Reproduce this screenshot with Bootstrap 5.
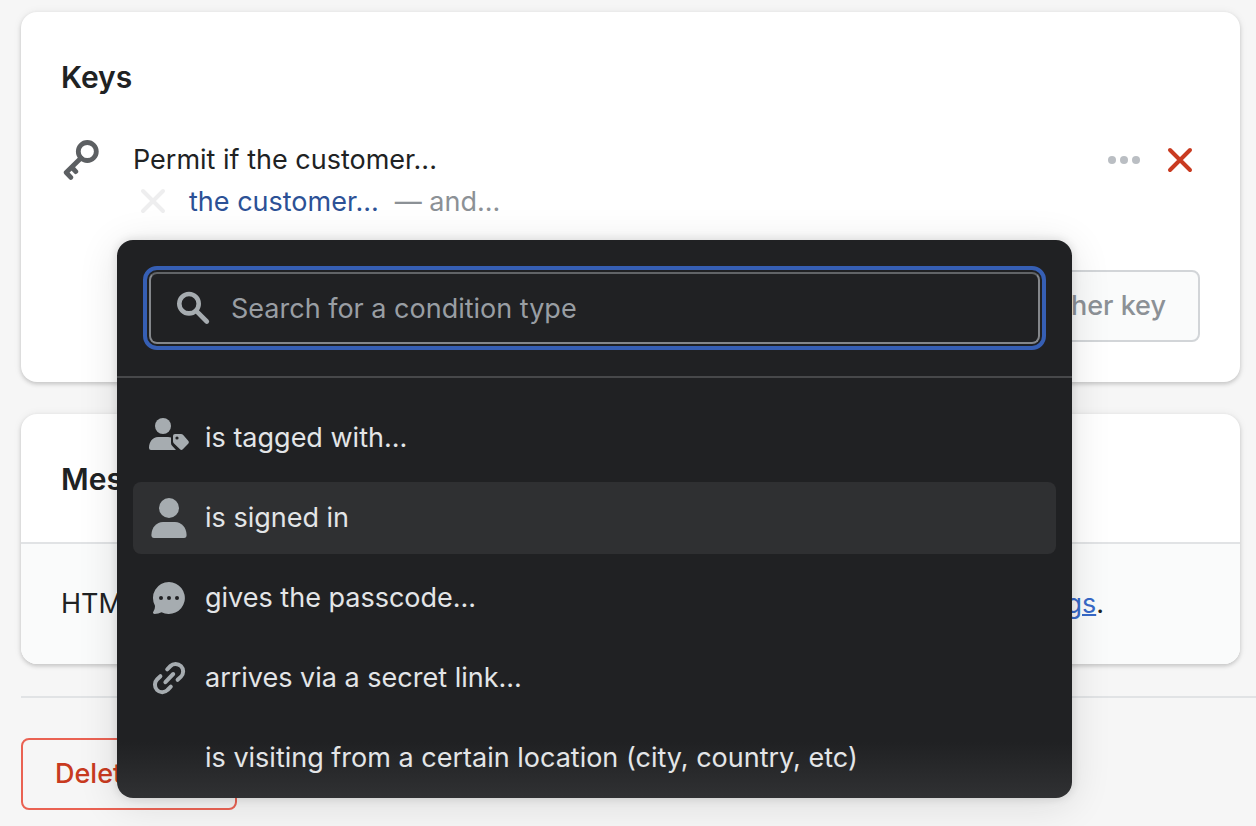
<!DOCTYPE html>
<html lang="en">
<head>
<meta charset="utf-8">
<meta name="viewport" content="width=device-width, initial-scale=1">
<title>Edit lock</title>
<link href="https://cdn.jsdelivr.net/npm/bootstrap@5.3.0/dist/css/bootstrap.min.css" rel="stylesheet">
<style>
  body { font-family: Inter, "Liberation Sans", sans-serif; font-size: 27px; line-height: 40px; color: #202223; background: #f6f6f6; overflow-x: hidden; }
  .page { padding: 12px 0 16px 21px; }
  .panel { border: 0; border-radius: 16px; margin: 0 16px 32px 0; box-shadow: 0 0 10px rgba(23,24,24,.06), 0 2px 4px rgba(0,0,0,.18); }
  .panel-pad { padding: 40px; }
  .panel h2 { font-size: 30px; line-height: 46px; font-weight: 600; margin: 0; padding-top: 2px; }
  .panel-foot { border-top: 2px solid #e1e3e5; background: #fafbfb; border-radius: 0 0 16px 16px; }
  .ico { width: 40px; height: 40px; display: block; flex: none; }
  .ico-btn { border: 0; background: none; padding: 0; flex: none; }
  .key-row { margin-top: 40px; }
  .key-gap { gap: 32px; }
  .cond { line-height: 44px; }
  .cond a { color: #2c5196; text-decoration: none; }
  .muted { color: #8c9196; }
  .add-row { margin-top: 46px; }
  .btn-lg2 { --bs-btn-font-size: 27px; --bs-btn-font-weight: 500; --bs-btn-border-width: 2px; --bs-btn-border-radius: 8px; --bs-btn-padding-x: 32px; --bs-btn-padding-y: 14px; --bs-btn-line-height: 40px; min-width: 216px; text-align: left; }
  .btn-add { --bs-btn-disabled-color: #8c9196; --bs-btn-disabled-bg: #fafbfb; --bs-btn-disabled-border-color: #d2d5d8; --bs-btn-disabled-opacity: 1; }
  .btn-del { --bs-btn-color: #c83a20; --bs-btn-border-color: #ea6253; --bs-btn-hover-color: #c83a20; --bs-btn-hover-border-color: #c83a20; }
  .rule { height: 2px; background: #e1e3e5; border: 0; opacity: 1; margin: 0 0 40px; }
  .note { padding-right: 136px; }
  .note a { color: #3769c8; text-decoration-thickness: 2px; }
  .picker { top: 100%; left: -16px; width: 100%; height: 558px; margin-top: 16px; background: linear-gradient(#202123 calc(100% - 56px), #303133); border-radius: 16px; color: #e3e5e7; overflow: hidden; z-index: 5; }
  .picker-shadow { box-shadow: 0 6px 40px rgba(23,24,24,.12), 0 0 10px rgba(23,24,24,.14); }
  .picker-search { padding: 32px; border-bottom: 2px solid #47484a; }
  .picker-search .ico { left: 24px; top: 16px; }
  .search-box, .search-box:focus { height: 72px; padding: 0 32px 0 80px; font-size: 27px; line-height: 40px; color: #e3e5e7; background: #202123; border: 2px solid #84878b; border-top-color: #616467; border-radius: 8px; outline: 4px solid #365fb4; outline-offset: 2px; box-shadow: none; }
  .search-box::placeholder { color: #999ea3; opacity: 1; }
  .picker-list { padding: 24px 16px; gap: 8px; }
  .picker-item { border: 0; background: none; color: inherit; text-align: left; padding: 16px; gap: 16px; border-radius: 8px; width: 100%; line-height: 40px; }
  .picker-item.current { background: #2f3032; }
</style>
</head>
<body>
<main class="page">
  <section class="card panel">
    <div class="panel-pad">
      <h2>Keys</h2>
      <div class="key-row d-flex align-items-start">
        <div class="d-flex key-gap flex-fill">
          <svg class="ico" viewBox="0 0 40 40" fill="none" stroke="#5c5f62" stroke-width="4.8" stroke-linecap="round" stroke-linejoin="round" aria-hidden="true"><circle cx="26.3" cy="11.5" r="9"/><path d="M20 18 5.200 32.500 9.800 37.400M11 27.500 14.800 31.600"/></svg>
          <div class="position-relative flex-fill">
            <div>Permit if the customer...</div>
            <div class="cond d-flex align-items-center">
              <button class="ico-btn me-3" type="button" aria-label="Remove condition"><svg class="ico" viewBox="0 0 40 40" stroke="#eeeeef" stroke-width="4" stroke-linecap="round"><path d="M10 9 30 29M30 9 10 29"/></svg></button>
              <a href="#">the customer...</a>
              <span class="muted ms-3">— and...</span>
            </div>
            <div class="picker picker-shadow position-absolute">
              <div class="picker-search">
                <div class="position-relative">
                  <input class="form-control search-box" type="text" placeholder="Search for a condition type" aria-label="Search for a condition type">
                  <svg class="ico position-absolute" viewBox="0 0 40 40" fill="none" stroke="#a6acb0" stroke-width="4.600" stroke-linecap="round" aria-hidden="true"><circle cx="16" cy="15.700" r="9.700"/><path d="M23.200 22.900 33.800 33.500"/></svg>
                </div>
              </div>
              <div class="picker-list d-flex flex-column">
                <button class="picker-item d-flex" type="button">
                  <svg class="ico" viewBox="0 0 40 40" fill="#a6acb0" aria-hidden="true"><circle cx="14" cy="8" r="8"/><path d="M9 19h10q2 0 3 .6v5.400q0 1.800 1.300 3.100L27 32H2q-2 0-2-2c0-6 3.500-11 9-11Z"/><path fill-rule="evenodd" d="M26 16h6q1.200 0 2 .8l5.200 6q1.300 1.500 0 3l-5.400 5.500q-1.400 1.300-2.800 0L25 25.500q-1-1-1-2.300V18q0-2 2-2Zm2 2.400a1.600 1.600 0 1 0 0 3.200 1.600 1.600 0 0 0 0-3.200Z"/></svg>
                  <span>is tagged with...</span>
                </button>
                <button class="picker-item current d-flex" type="button">
                  <svg class="ico" viewBox="0 0 40 40" fill="#a6acb0" aria-hidden="true"><circle cx="20" cy="10" r="10"/><path d="M14 24h12c6.500 0 11.400 5.500 11.600 13q0 3-2.600 3H5q-2.600 0-2.600-3C2.600 29.500 7.500 24 14 24Z"/></svg>
                  <span>is signed in</span>
                </button>
                <button class="picker-item d-flex" type="button">
                  <svg class="ico" viewBox="0 0 40 40" fill="#a6acb0" aria-hidden="true"><path fill-rule="evenodd" d="M20 4a16 16 0 1 1-7.500 30.200q-3 1.800-7 1.800-2.200-.2-1.200-2.200 2-3 1.600-6.200A16 16 0 0 1 20 4Zm-8 14a2 2 0 1 0 0 4 2 2 0 0 0 0-4Zm8 0a2 2 0 1 0 0 4 2 2 0 0 0 0-4Zm8 0a2 2 0 1 0 0 4 2 2 0 0 0 0-4Z"/></svg>
                  <span>gives the passcode...</span>
                </button>
                <button class="picker-item d-flex" type="button">
                  <svg class="ico" viewBox="0 0 40 40" fill="none" stroke="#a6acb0" stroke-width="4" stroke-linecap="round" stroke-linejoin="round" aria-hidden="true"><path d="M16.400 24.200 24.200 16M18.200 11.300 21.500 8C24 5.400 29 5.200 32 8.200S34.700 16 32 18.600L28.600 21.800M11.400 18.200 8 21.500C5.300 24.200 5.200 29 8 32S16 34.700 18.500 32L21.800 28.600"/></svg>
                  <span>arrives via a secret link...</span>
                </button>
                <button class="picker-item d-flex" type="button">
                  <span class="ico"></span>
                  <span class="text-nowrap">is visiting from a certain location (city, country, etc)</span>
                </button>
              </div>
            </div>
          </div>
        </div>
        <button class="ico-btn ms-3" type="button" aria-label="More options"><svg class="ico" viewBox="0 0 40 40" fill="#babec3"><circle cx="8" cy="20" r="4"/><circle cx="20" cy="20" r="4"/><circle cx="32" cy="20" r="4"/></svg></button>
        <button class="ico-btn ms-3" type="button" aria-label="Delete key"><svg class="ico" viewBox="0 0 40 40" stroke="#c93b21" stroke-width="4" stroke-linecap="round"><path d="M10 10 30 30M30 10 10 30"/></svg></button>
      </div>
      <div class="add-row d-flex justify-content-end">
        <button class="btn btn-lg2 btn-add" type="button" disabled>Add another key</button>
      </div>
    </div>
  </section>

  <section class="card panel">
    <div class="panel-pad"><h2>Messages</h2></div>
    <div class="panel-pad panel-foot note d-flex justify-content-between"><span>HTML</span><span><a href="#">settings</a>.</span></div>
  </section>

  <hr class="rule">
  <button class="btn btn-lg2 btn-del" type="button">Delete lock</button>
</main>
<script src="https://cdn.jsdelivr.net/npm/bootstrap@5.3.0/dist/js/bootstrap.bundle.min.js"></script>
</body>
</html>
